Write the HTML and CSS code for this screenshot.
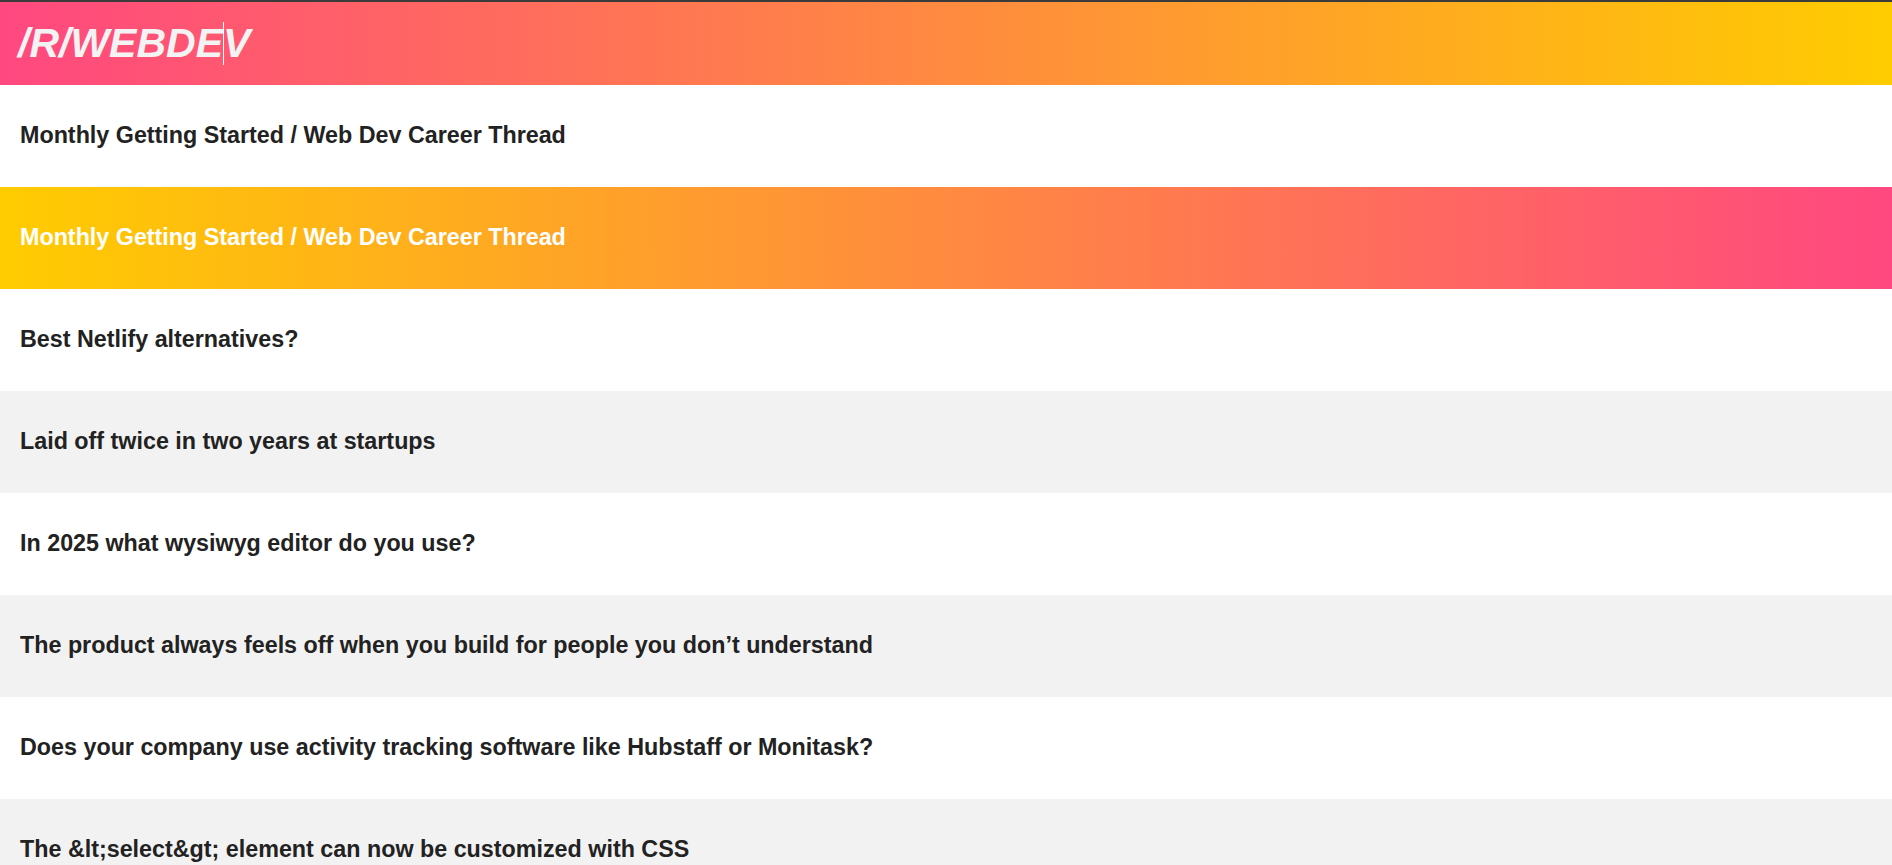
FILE: index.html
```html
<!DOCTYPE html>
<html lang="en">
<head>
<meta charset="utf-8">
<title>/r/webdev</title>
<link rel="stylesheet" href="styles.css">
</head>
<body>
<header class="topbar">
  <h1 class="title">/R/WEBDE<span class="caret"></span>V</h1>
</header>
<ul class="posts">
  <li class="post">Monthly Getting Started / Web Dev Career Thread</li>
  <li class="post post-active">Monthly Getting Started / Web Dev Career Thread</li>
  <li class="post">Best Netlify alternatives?</li>
  <li class="post">Laid off twice in two years at startups</li>
  <li class="post">In 2025 what wysiwyg editor do you use?</li>
  <li class="post">The product always feels off when you build for people you don’t understand</li>
  <li class="post">Does your company use activity tracking software like Hubstaff or Monitask?</li>
  <li class="post">The &amp;lt;select&amp;gt; element can now be customized with CSS</li>
</ul>
</body>
</html>
```

FILE: styles.css
```css
html {
  overflow: hidden;
}

body {
  margin: 0;
  font-family: "Liberation Sans", Arial, sans-serif;
  background: #ffffff;
}

.topbar {
  border-top: 2px solid #3b3b3b;
  background: linear-gradient(to right, #ff4880, #ffcc00);
  padding: 18px 17px 19px 18px;
}

.title {
  margin: 0;
  font-size: 41px;
  font-weight: bold;
  font-style: italic;
  line-height: 46px;
  color: #f3f3f3;
}

.caret {
  display: inline-block;
  width: 0;
  height: 43px;
  border-left: 1px solid #ffffff;
  margin-right: -1px;
  vertical-align: -8px;
}

.posts {
  list-style: none;
  margin: 0;
  padding: 0;
}

.post {
  padding: 37px 20px 0;
  height: 65px;
  font-size: 23.3px;
  font-weight: bold;
  line-height: 27px;
  color: #222222;
  background: #ffffff;
}

.post:nth-child(even) {
  background: #f2f2f2;
}

.post.post-active {
  background: linear-gradient(to right, #ffcc00, #ff4880);
  color: #ffffff;
}
```
